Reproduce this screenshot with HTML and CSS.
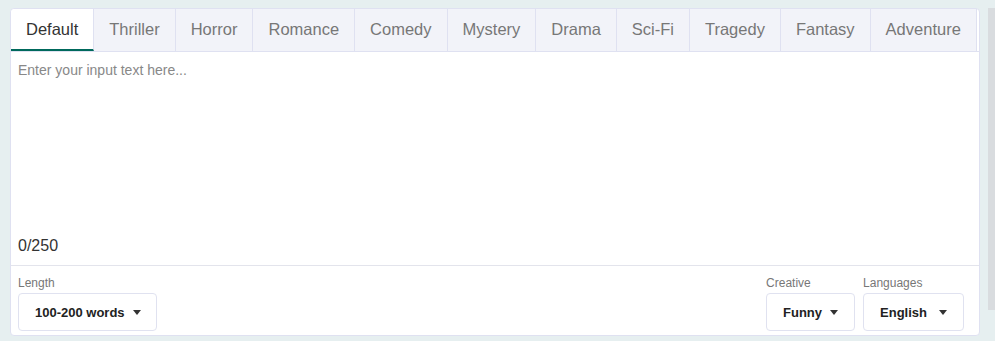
FILE: index.html
```html
<!DOCTYPE html>
<html lang="en">
<head>
    <meta charset="UTF-8">
    <meta name="viewport" content="width=device-width, initial-scale=1.0">
    <title>Story Generator</title>
    <link rel="stylesheet" href="styles.css">
</head>
<body>

<div class="page">
    <div class="card">
        <div class="tabs">
            <div class="tab active">Default</div>
            <div class="tab">Thriller</div>
            <div class="tab">Horror</div>
            <div class="tab">Romance</div>
            <div class="tab">Comedy</div>
            <div class="tab">Mystery</div>
            <div class="tab">Drama</div>
            <div class="tab">Sci-Fi</div>
            <div class="tab">Tragedy</div>
            <div class="tab">Fantasy</div>
            <div class="tab">Adventure</div>
        </div>

        <div class="editor">
            <textarea class="input" placeholder="Enter your input text here..."></textarea>
            <div class="counter">0/250</div>
        </div>

        <div class="options">
            <div class="option">
                <div class="option-label">Length</div>
                <button class="dropdown length">100-200 words <span class="caret"></span></button>
            </div>
            <div class="spacer"></div>
            <div class="option">
                <div class="option-label">Creative</div>
                <button class="dropdown">Funny <span class="caret"></span></button>
            </div>
            <div class="option">
                <div class="option-label">Languages</div>
                <button class="dropdown lang">English <span class="caret"></span></button>
            </div>
        </div>
    </div>
    <div class="side"></div>
</div>

</body>
</html>
```

FILE: styles.css
```css
body {
    margin: 0;
    font-family: "Liberation Sans", Arial, sans-serif;
    background-color: #e6eff0; /* fondo verde grisaceo */
}
.page {
    display: flex;
    align-items: flex-start;
    gap: 8px;
    padding: 8px 0 0 10px;
}
.card {
    width: 970px;
    height: 328px;
    box-sizing: border-box;
    background: #fff;
    border: 1px solid #dfe1f1;
    border-radius: 4px;
    display: flex;
    flex-direction: column;
}
.side {
    flex: 1;
    height: 302px;
    background: #d9dcdf;
}
.tabs {
    display: flex;
    height: 42px;
    border-bottom: 1px solid #dfe1f1;
}
.tab {
    padding: 0 15px;
    line-height: 40px;
    font-size: 16.5px;
    color: #777;
    background: #f2f3f9;
    border-right: 1px solid #dfe1f1;
    white-space: nowrap;
}
.tab.active {
    background: #fff;
    color: #333;
    border-bottom: 2px solid #00695c;
}
.tab:first-child {
    border-top-left-radius: 4px;
}
.editor {
    flex: 1;
    display: flex;
    flex-direction: column;
    padding: 10px 7px 10px;
    border-bottom: 1px solid #e3e4ec;
}
.input {
    flex: 1;
    border: none;
    outline: none;
    resize: none;
    padding: 0;
    font-family: inherit;
    font-size: 14px;
    color: #333;
}
.input::placeholder {
    color: #888;
}
.counter {
    font-size: 16px;
    color: #333;
}
.options {
    display: flex;
    align-items: flex-end;
    gap: 8px;
    padding: 10px 15px 4px 7px;
}
.spacer {
    flex: 1;
}
.option-label {
    font-size: 12px;
    color: #777;
    margin-bottom: 3px;
}
.dropdown {
    height: 38px;
    padding: 0 16px;
    background: #fff;
    border: 1px solid #e0e2f0;
    border-radius: 4px;
    font-family: inherit;
    font-size: 13px;
    font-weight: bold;
    color: #222;
    display: flex;
    align-items: center;
    gap: 8px;
    white-space: nowrap;
}
.dropdown.length {
    width: 139px;
}
.dropdown.lang {
    gap: 12px;
}
.caret {
    width: 0;
    height: 0;
    border-left: 4.5px solid transparent;
    border-right: 4.5px solid transparent;
    border-top: 5px solid #333;
}
```
